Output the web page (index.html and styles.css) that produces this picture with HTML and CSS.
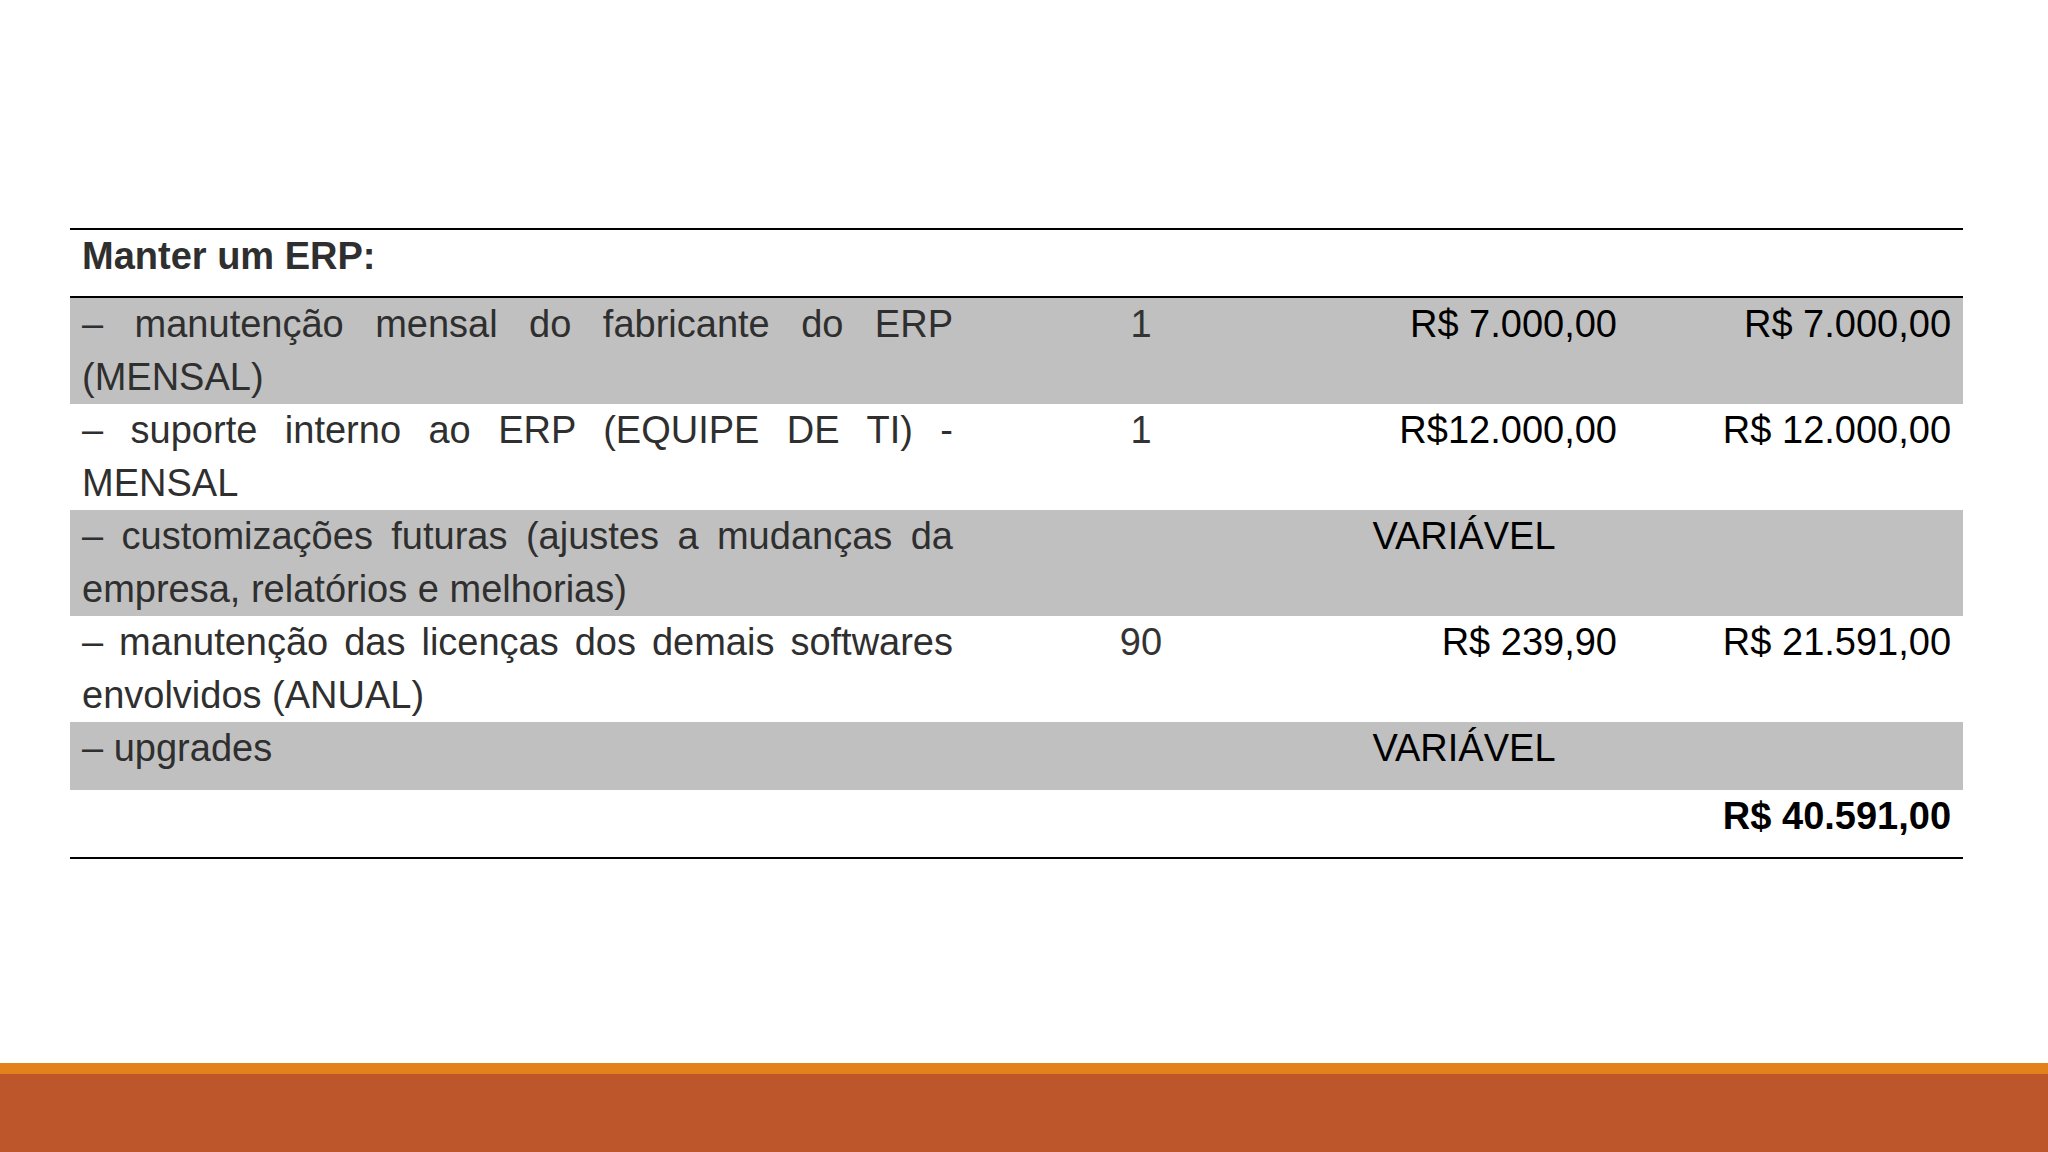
FILE: index.html
```html
<!DOCTYPE html>
<html lang="pt-BR">
<head>
<meta charset="utf-8">
<title>Manter um ERP</title>
<link rel="stylesheet" href="styles.css">
</head>
<body>
<div class="slide">
  <main class="content">
    <table class="cost-table">
      <colgroup>
        <col class="c-desc">
        <col class="c-qty">
        <col class="c-unit">
        <col class="c-total">
      </colgroup>
      <thead>
        <tr class="head-row">
          <th class="desc" colspan="4">Manter um ERP:</th>
        </tr>
      </thead>
      <tbody>
        <tr class="shade">
          <td class="desc">– manutenção mensal do fabricante do ERP (MENSAL)</td>
          <td class="qty">1</td>
          <td class="money">R$ 7.000,00</td>
          <td class="money">R$ 7.000,00</td>
        </tr>
        <tr>
          <td class="desc">– suporte interno ao ERP (EQUIPE DE TI) - MENSAL</td>
          <td class="qty">1</td>
          <td class="money">R$12.000,00</td>
          <td class="money">R$ 12.000,00</td>
        </tr>
        <tr class="shade">
          <td class="desc">– customizações futuras (ajustes a mudanças da empresa, relatórios e melhorias)</td>
          <td class="var" colspan="3">VARIÁVEL</td>
        </tr>
        <tr>
          <td class="desc">– manutenção das licenças dos demais softwares envolvidos (ANUAL)</td>
          <td class="qty">90</td>
          <td class="money">R$ 239,90</td>
          <td class="money">R$ 21.591,00</td>
        </tr>
        <tr class="shade single">
          <td class="desc">– upgrades</td>
          <td class="var" colspan="3">VARIÁVEL</td>
        </tr>
        <tr class="total-row">
          <td class="desc"></td>
          <td class="qty"></td>
          <td class="money"></td>
          <td class="money total">R$ 40.591,00</td>
        </tr>
      </tbody>
    </table>
  </main>
  <footer class="footer">
    <div class="stripe"></div>
    <div class="band"></div>
  </footer>
</div>
</body>
</html>
```

FILE: styles.css
```css
html, body {
  margin: 0;
  padding: 0;
  background: #ffffff;
}

.slide {
  width: 2048px;
  height: 1152px;
  display: flex;
  flex-direction: column;
  background: #ffffff;
  font-family: "Liberation Sans", Arial, sans-serif;
  overflow: hidden;
}

.content {
  flex: 1;
  padding: 228px 0 0 70px;
}

.cost-table {
  width: 1893px;
  table-layout: fixed;
  border-collapse: collapse;
  border-top: 2px solid #000;
  border-bottom: 2px solid #000;
  font-size: 38px;
  line-height: 53px;
}

.c-desc { width: 895px; }
.c-qty { width: 352px; }
.c-unit { width: 312px; }
.c-total { width: 334px; }

.cost-table th,
.cost-table td {
  padding: 0 12px;
  vertical-align: top;
}

.head-row {
  height: 68px;
  border-bottom: 2px solid #000;
}

.head-row th {
  text-align: left;
  font-weight: bold;
  color: #2f2f2f;
}

.shade {
  background: #c0c0c0;
}

.single,
.total-row {
  height: 68px;
}

.desc {
  color: #2f2f2f;
  text-align: justify;
  text-align-last: left;
}

.qty {
  color: #333333;
  text-align: center;
}

.money {
  color: #000000;
  text-align: right;
}

.var {
  color: #000000;
  text-align: center;
}

.total {
  font-weight: bold;
}

.footer {
  display: flex;
  flex-direction: column;
}

.stripe {
  height: 11px;
  background: #e3821a;
}

.band {
  height: 78px;
  background: #bd562b;
}
```
